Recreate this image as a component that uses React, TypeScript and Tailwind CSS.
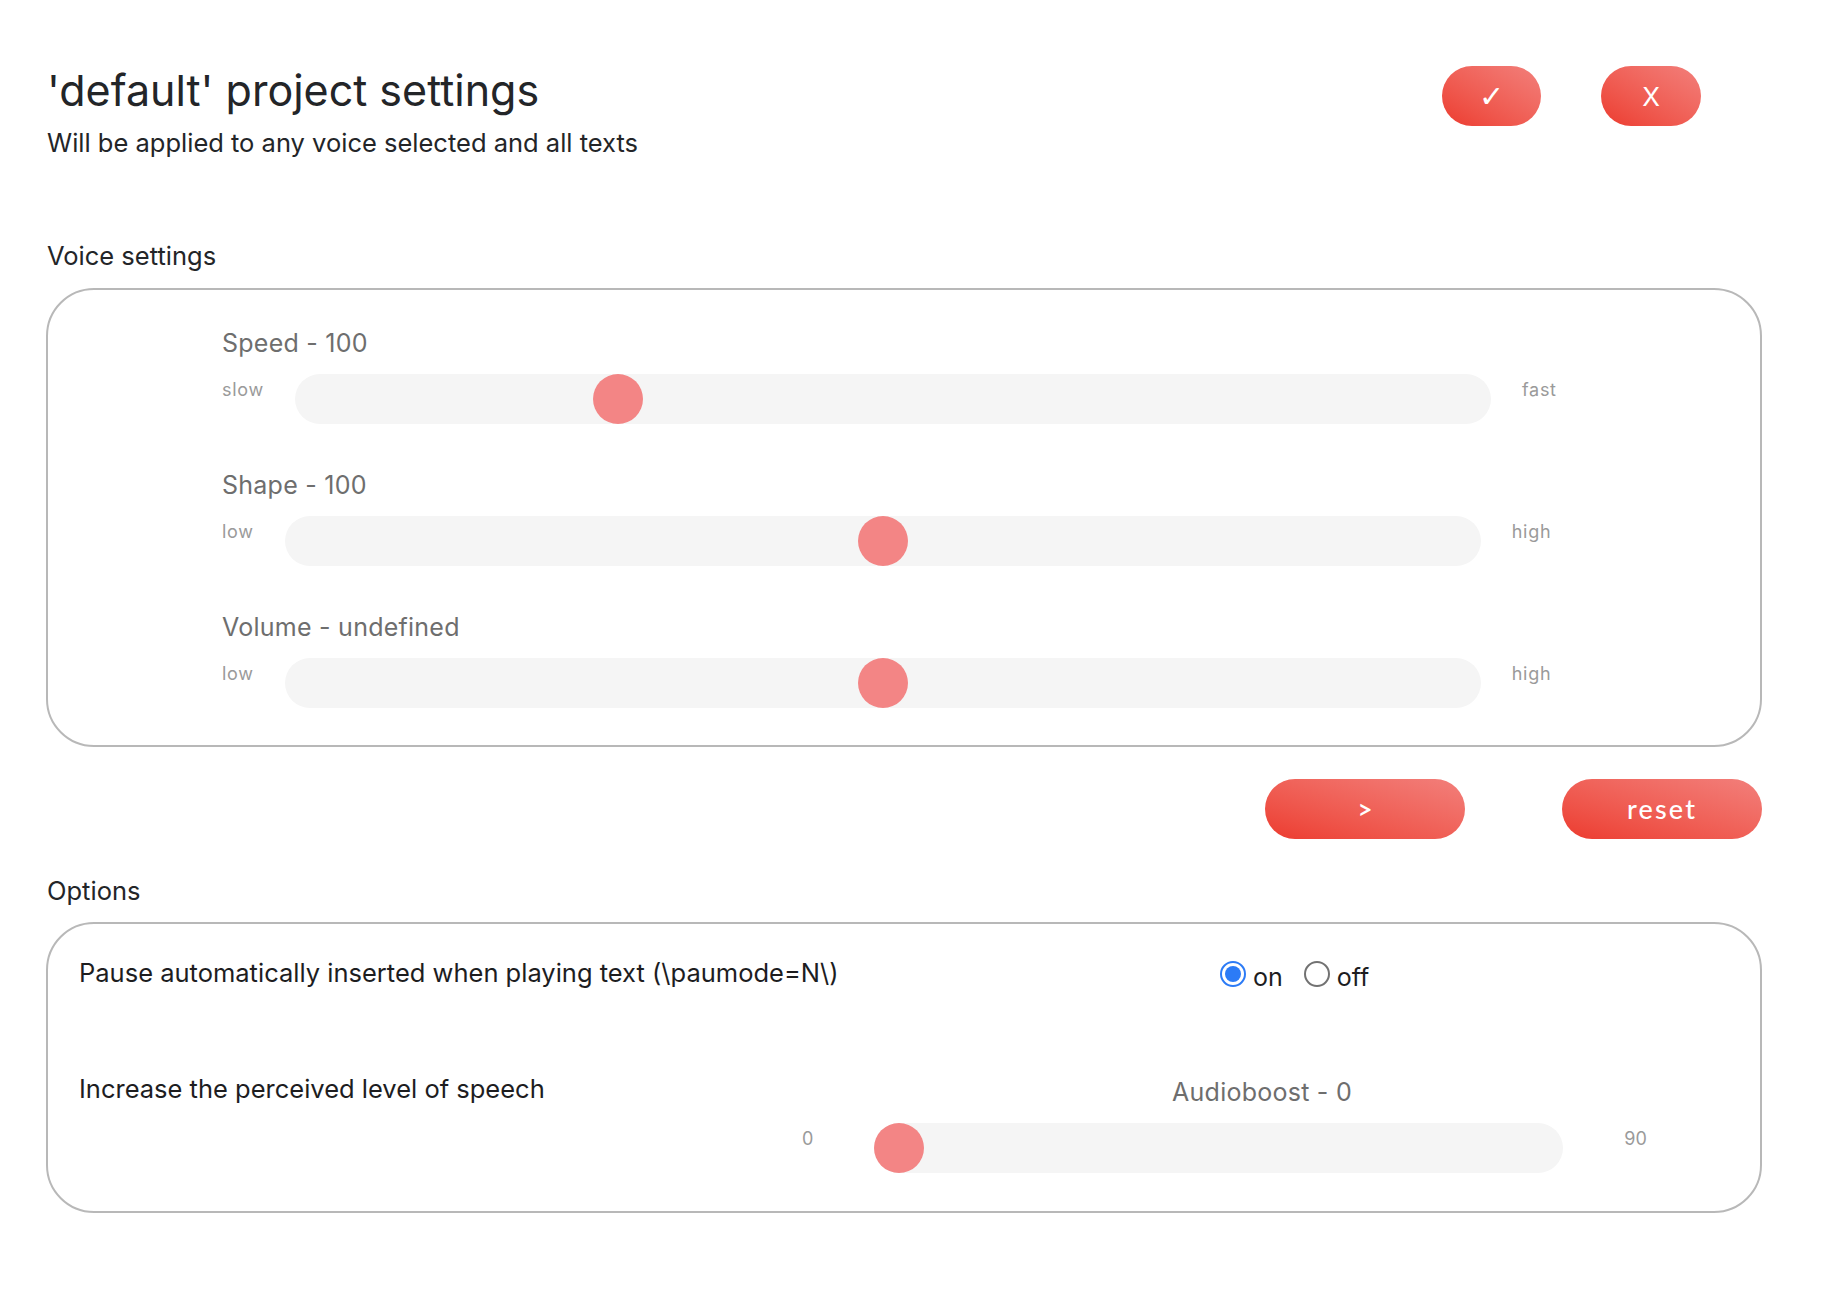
import React from 'react'

const sans = "font-['Inter','Noto_Sans',sans-serif]"
const pill =
  "flex items-center justify-center rounded-full bg-linear-to-tr from-[#ec3a2e] to-[#f27f7b] text-white"

interface SliderProps {
  label: string
  low: string
  high: string
  pos: number
}

function VoiceSlider({ label, low, high, pos }: SliderProps) {
  return (
    <div>
      <div className="text-[25px] leading-[32px] tracking-[0.01em] text-[#6e6e6e]">{label}</div>
      <div className="mt-[15px] flex items-start gap-[31px]">
        <span className="mt-[4px] text-[18px] leading-[24px] tracking-[0.04em] text-[#9a9a9a]">{low}</span>
        <div className="relative h-[50px] w-[1196px] rounded-full bg-[#f5f5f5]">
          <div
            className="absolute top-0 h-[50px] w-[50px] rounded-full bg-[#f38585]"
            style={{ left: `calc(${pos * 100}% - ${pos * 50}px)` }}
          />
        </div>
        <span className="mt-[4px] text-[18px] leading-[24px] tracking-[0.04em] text-[#9a9a9a]">{high}</span>
      </div>
    </div>
  )
}

function Radio({ checked, label }: { checked: boolean; label: string }) {
  return (
    <label className="flex items-center gap-[7px]">
      {checked ? (
        <span className="mb-[6px] flex h-[26px] w-[26px] items-center justify-center rounded-full border-2 border-[#2c7bf6] bg-white">
          <span className="h-[16px] w-[16px] rounded-full bg-[#2c7bf6]" />
        </span>
      ) : (
        <span className="mb-[6px] h-[26px] w-[26px] rounded-full border-2 border-[#727272] bg-white" />
      )}
      <span className="text-[25px] leading-[32px] text-[#1d1d1f]">{label}</span>
    </label>
  )
}

export default function App() {
  const sliders: SliderProps[] = [
    { label: 'Speed - 100', low: 'slow', high: 'fast', pos: 0.26 },
    { label: 'Shape - 100', low: 'low', high: 'high', pos: 0.5 },
    { label: 'Volume - undefined', low: 'low', high: 'high', pos: 0.5 },
  ]

  return (
    <div className={`${sans} min-h-[1296px] bg-white text-[#232528]`}>
      <div className="ml-[46px] w-[1716px] pt-[64px] pb-[80px]">
        {/* header */}
        <div className="flex items-start justify-between">
          <div className="pl-[1px]">
            <h1 className="text-[43px] leading-[52px] font-normal">'default' project settings</h1>
            <p className="mt-[10px] text-[25.5px] leading-[34px]">Will be applied to any voice selected and all texts</p>
          </div>
          <div className="mt-[2px] mr-[61px] flex gap-[60px]">
            <button className={`${pill} h-[60px] w-[99px] font-['DejaVu_Sans',sans-serif] text-[30px] font-light`}>✓</button>
            <button className={`${pill} h-[60px] w-[100px] text-[26px]`}>X</button>
          </div>
        </div>

        {/* voice settings */}
        <div className="mt-[80px] pl-[1px] text-[25.5px] leading-[32px]">Voice settings</div>
        <div className="mt-[16px] flex flex-col gap-[45px] rounded-[48px] border-2 border-[#b8b8b8] pt-[37px] pb-[37px] pl-[174px]">
          {sliders.map((s) => (
            <VoiceSlider key={s.label} {...s} />
          ))}
        </div>

        <div className="mt-[32px] flex justify-end gap-[97px] font-['Lato',sans-serif]">
          <button className={`${pill} h-[60px] w-[200px] text-[26px] font-semibold`}>&gt;</button>
          <button className={`${pill} h-[60px] w-[200px] text-[27px] font-medium tracking-[0.08em]`}>reset</button>
        </div>

        {/* options */}
        <div className="mt-[36px] pl-[1px] text-[25.5px] leading-[32px]">Options</div>
        <div className="mt-[15px] rounded-[48px] border-2 border-[#b8b8b8] pt-[33px] pb-[38px] pl-[31px]">
          <div className="flex items-start">
            <div className="w-[1141px] shrink-0 text-[25.5px] leading-[32px] text-[#1d1d1f]">
              Pause automatically inserted when playing text (\paumode=N\)
            </div>
            <div className="mt-[4px] flex gap-[21px]">
              <Radio checked label="on" />
              <Radio checked={false} label="off" />
            </div>
          </div>
          <div className="mt-[80px] flex items-start">
            <div className="w-[723px] shrink-0 text-[25.5px] leading-[32px] text-[#1d1d1f]">
              Increase the perceived level of speech
            </div>
            <div className="mt-[3px] w-[920px]">
              <div className="text-center text-[25px] leading-[32px] tracking-[0.01em] text-[#6e6e6e]">Audioboost - 0</div>
              <div className="mt-[15px] flex items-start gap-[61px]">
                <span className="mt-[4px] text-[18px] leading-[24px] text-[#9a9a9a]">0</span>
                <div className="relative h-[50px] w-[689px] rounded-full bg-[#f5f5f5]">
                  <div className="absolute top-0 left-0 h-[50px] w-[50px] rounded-full bg-[#f38585]" />
                </div>
                <span className="mt-[4px] text-[18px] leading-[24px] text-[#9a9a9a]">90</span>
              </div>
            </div>
          </div>
        </div>
      </div>
    </div>
  )
}
